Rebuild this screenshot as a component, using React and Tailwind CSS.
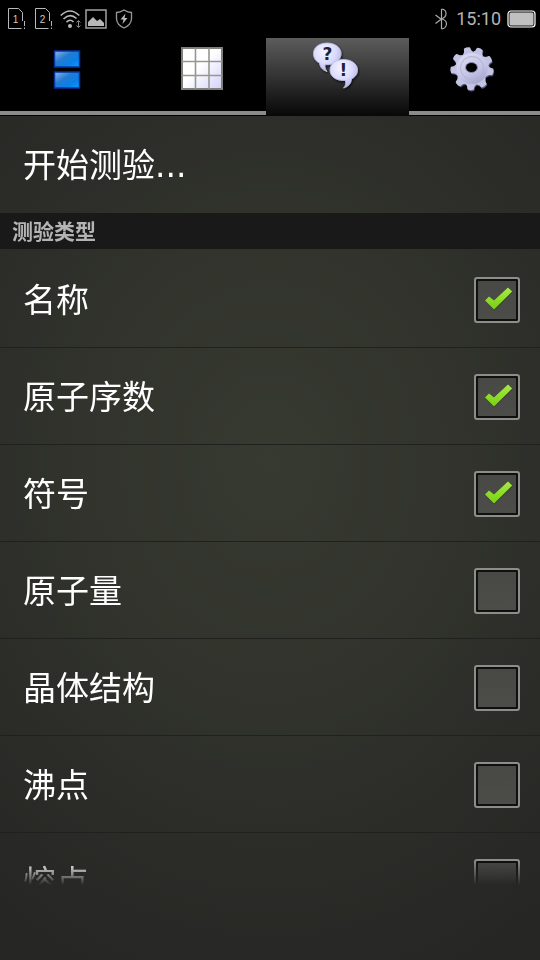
import React, { useState } from "react";

function SimIcon({ number }) {
  return (
    <svg width="18" height="22" viewBox="0 0 18 22" fill="none" stroke="#b8b8b8" strokeWidth="1">
      <path d="M0.5 .5H10.500L14.500 4.500V13M13.500 20.500H.5V.5" />
      <path d="M16.500 13V18M16.500 19.500V21" />
      <text x="7.500" y="15" textAnchor="middle" fill="#c8c8c8" stroke="none" fontSize="10" fontFamily="Liberation Sans, sans-serif">
        {number}
      </text>
    </svg>
  );
}

function StatusBar() {
  return (
    <header className="flex h-[38px] shrink-0 items-center bg-black pl-2 pr-1">
      <div className="flex items-center gap-[9px]">
        <SimIcon number="1" />
        <SimIcon number="2" />
      </div>
      <svg className="ml-[7px]" width="22" height="20" viewBox="0 0 22 20" fill="none" stroke="#b8b8b8" strokeWidth="1.600">
        <path d="M.7 6.500Q10 -2.500 19.300 6.500M3.500 10Q10 3.500 16.500 9.500M6.500 13.200Q10 9.500 13.500 13" />
        <circle cx="10" cy="17" r="2" fill="#b8b8b8" stroke="none" />
        <path d="M16.500 13.500L18.500 11.500L20.500 13.500M16.500 16.500L18.500 18.500L20.500 16.500M18.500 12V18" strokeWidth="1" stroke="#888" />
      </svg>
      <svg className="ml-[3px]" width="22" height="20" viewBox="0 0 22 20">
        <rect x="1" y="1" width="20" height="18" fill="none" stroke="#999" strokeWidth="1.600" />
        <path d="M3 17V13L8 8L12 12L15 10L19 14V17Z" fill="#b8b8b8" />
      </svg>
      <svg className="ml-2" width="18" height="20" viewBox="0 0 18 20" fill="none" stroke="#999" strokeWidth="1.300">
        <path d="M9 1Q5 3.500 1.500 3.500V10Q2 16 9 19Q16 16 16.500 10V3.500Q13 3.500 9 1Z" />
        <path d="M10.500 4.500L5.500 10.500H8.500L7.500 15L12.500 9H9.500Z" fill="#bbb" stroke="none" />
      </svg>
      <div className="ml-auto flex items-center">
        <svg width="13" height="22" viewBox="0 0 13 22" fill="none" stroke="#aaa" strokeWidth="1.200">
          <path d="M6.500 1V21M.5 7L6.500 11.500M.5 15.500L6.500 11M6.500 1Q11 1.500 11 5.500Q11 9.500 6.500 11Q11.500 12 11.500 16Q11 20.500 6.500 21" />
        </svg>
        <time className="ml-2 font-[Roboto,sans-serif] text-[18px] leading-6 text-[#b4b4b4]">15:10</time>
        <svg className="ml-[6px]" width="29" height="18" viewBox="0 0 29 18">
          <rect x="1" y="1" width="27" height="16" rx="3" fill="#111" stroke="#fff" strokeWidth="1.200" />
          <rect x="2.500" y="2.500" width="24" height="13" rx="1.500" fill="#c0c0c0" />
        </svg>
      </div>
    </header>
  );
}

function ElementIcon() {
  return (
    <svg width="28" height="40" viewBox="0 0 28 40">
      <defs>
        <linearGradient id="blue" x1="0" y1="0" x2="1" y2="1">
          <stop offset="0" stopColor="#90b8ea" />
          <stop offset=".4" stopColor="#237bd3" />
          <stop offset=".7" stopColor="#0880e8" />
          <stop offset="1" stopColor="#08a0ff" />
        </linearGradient>
      </defs>
      <g fill="url(#blue)" stroke="#0732a2" strokeWidth="1.500">
        <rect x="1.500" y="1" width="25" height="16" />
        <rect x="1.500" y="22" width="25" height="16" />
      </g>
    </svg>
  );
}

function TableIcon() {
  return (
    <svg width="42" height="43" viewBox="0 0 42 43">
      <defs>
        <linearGradient id="paper" x1="0" y1="0" x2="1" y2="1">
          <stop offset=".45" stopColor="#fff" />
          <stop offset="1" stopColor="#d0d0fa" />
        </linearGradient>
      </defs>
      <rect x="1" y="1" width="40" height="41" fill="url(#paper)" stroke="#80807a" strokeWidth="2" />
      <path d="M14.500 1V42M28 1V42M1 14.500H41M1 28.500H41" stroke="#969692" strokeWidth="1.600" />
    </svg>
  );
}

function QuizIcon() {
  return (
    <svg width="48" height="50" viewBox="1 0 48 50">
      <defs>
        <radialGradient id="bubble" cx=".4" cy=".3" r=".75">
          <stop offset="0" stopColor="#f4f4ff" />
          <stop offset=".55" stopColor="#dadafc" />
          <stop offset="1" stopColor="#b0b0e4" />
        </radialGradient>
        <filter id="shadow" x="-20%" y="-20%" width="150%" height="150%">
          <feDropShadow dx="1" dy="1.500" stdDeviation="1.200" floodColor="#000" floodOpacity=".7" />
        </filter>
      </defs>
      <g filter="url(#shadow)" fill="url(#bubble)" stroke="#c0c0ea" strokeWidth=".8">
        <path d="M15 2C7 2 1.500 6.500 1.500 12.500C1.500 17 4 20.500 7.500 22C8 26 10 28.500 15 30.500C13 28 12.800 26 13 23.500C22 24.500 29 19.500 29 12.500C29 6.500 23 2 15 2Z" />
        <path d="M31.500 18.500C24 18.500 18 23 18 29C18 35.500 24 40 33.500 39.500C34 42.500 33.500 45 31.500 47C36.500 45.500 39 42.500 39.500 38C43 36 45.500 33 45.500 29C45.500 23 39.500 18.500 31.500 18.500Z" />
      </g>
      <g fill="#20203c" fontFamily="DejaVu Sans, sans-serif" fontWeight="bold" fontSize="17" textAnchor="middle">
        <text x="15.500" y="19">?</text>
        <text x="31.500" y="35">!</text>
      </g>
    </svg>
  );
}

const teeth = [-14, 22, 62, 99, 145, 184, 222, 266, 305];

function GearShape({ fill }) {
  return (
    <g fill={fill} stroke={fill} strokeWidth="1.500" strokeLinejoin="round">
      <circle cx="23" cy="22.500" r="15" />
      {teeth.map((a) => (
        <path key={a} d="M17 9L20 5L20.500 2Q23 1 25.500 2L26 5L29 9Z" transform={`rotate(${a} 23 22.500)`} />
      ))}
    </g>
  );
}

function GearIcon() {
  return (
    <svg width="46" height="46" viewBox="0 0 46 46">
      <defs>
        <linearGradient id="gear" gradientUnits="userSpaceOnUse" x1="12" y1="6" x2="30" y2="40">
          <stop offset="0" stopColor="#dedef2" />
          <stop offset=".6" stopColor="#c4c4e6" />
          <stop offset="1" stopColor="#a0a0cb" />
        </linearGradient>
        <mask id="hub">
          <rect width="46" height="46" fill="#fff" />
          <ellipse cx="22.500" cy="21.500" rx="5.500" ry="4.600" fill="#000" />
        </mask>
      </defs>
      <g mask="url(#hub)">
        <g transform="translate(.6 1.200)">
          <GearShape fill="#54547f" />
        </g>
        <GearShape fill="#c3c3e3" />
        <circle cx="23" cy="22.500" r="15.500" fill="url(#gear)" />
        <circle cx="23" cy="22" r="11.500" fill="none" stroke="#b2b2d4" />
        <ellipse cx="22.500" cy="21.500" rx="5.800" ry="4.900" fill="none" stroke="#6d6d94" strokeWidth="1" />
      </g>
    </svg>
  );
}

const tabs = [
  { label: "元素", Icon: ElementIcon, pad: "pt-3" },
  { label: "周期表", Icon: TableIcon, pad: "pt-[9px]" },
  { label: "测验", Icon: QuizIcon, pad: "pt-[3px]" },
  { label: "设置", Icon: GearIcon, pad: "pt-2" },
];

function TabBar() {
  const active = 2;
  return (
    <nav className="grid h-[78px] shrink-0 grid-cols-4 bg-black">
      {tabs.map(({ label, Icon, pad }, i) => (
        <button
          key={label}
          type="button"
          aria-label={label}
          aria-current={i === active ? "page" : undefined}
          className={`flex items-start justify-center pr-0.5 ${pad} ${
            i === active
              ? "z-10 -mx-1 bg-linear-to-b from-[#5c5c5c] via-[#333333] to-[#080808]"
              : "mb-px border-b-4 border-[#8b8b8b]"
          }`}
        >
          <Icon />
        </button>
      ))}
    </nav>
  );
}

function OptionRow({ label, defaultChecked }) {
  const [checked, setChecked] = useState(defaultChecked);
  return (
    <li className="border-b border-[#20211e]">
      <label className="flex h-24 items-start justify-between pt-[26px] pr-5 pl-[23px]">
        <span className="text-[33px] leading-[42px] text-white">{label}</span>
        <span className="grid place-items-center">
          <input
            type="checkbox"
            checked={checked}
            onChange={(e) => setChecked(e.target.checked)}
            className="peer col-start-1 row-start-1 size-[46px] appearance-none rounded-[3px] border-2 border-[#8d8e8b] bg-linear-to-b from-[#484945] to-[#4c4d49] shadow-[inset_0_0_0_2px_#10110f]"
          />
          <svg className="pointer-events-none invisible col-start-1 row-start-1 peer-checked:visible" width="46" height="46" viewBox="0 0 46 46">
            <defs>
              <linearGradient id="tick" x1="0" y1="0" x2="0" y2="1">
                <stop offset="0" stopColor="#a8ea45" />
                <stop offset="1" stopColor="#77d010" />
              </linearGradient>
            </defs>
            <path d="M11 24L15 20L20 25L34 11L39 15L20 33.500Z" fill="#252820" opacity=".5" />
            <path d="M11 23.500L15 19.500L20 23.500L34 10.500L38.200 14.500L20 32.500Z" fill="url(#tick)" />
          </svg>
        </span>
      </label>
    </li>
  );
}

const options = [
  ["名称", true],
  ["原子序数", true],
  ["符号", true],
  ["原子量", false],
  ["晶体结构", false],
  ["沸点", false],
  ["熔点", false],
];

export default function App() {
  return (
    <div
      lang="zh-CN"
      className="flex h-screen flex-col overflow-hidden bg-[#262626] bg-[radial-gradient(ellipse_85%_58%_at_50%_48%,#373a31_0%,#31332c_42%,#2a2a27_78%,#262625_100%)] font-['Noto_Sans_CJK_SC',sans-serif]"
    >
      <StatusBar />
      <TabBar />
      <main className="mb-[75px] min-h-0 flex-1 overflow-hidden mask-[linear-gradient(to_bottom,#000_calc(100%-24px),transparent)]">
        <button type="button" className="block h-[97px] w-full pl-[23px] text-left text-[33px] leading-[42px] text-white">
          开始测验<span className="font-['DejaVu_Sans',sans-serif]">...</span>
        </button>
        <h2 className="h-9 bg-[#191919] pl-3 text-[21px] leading-[34px] font-bold text-[#b4b4b4]">测验类型</h2>
        <ul className="pt-0.5">
          {options.map(([label, checked]) => (
            <OptionRow key={label} label={label} defaultChecked={checked} />
          ))}
        </ul>
      </main>
    </div>
  );
}
